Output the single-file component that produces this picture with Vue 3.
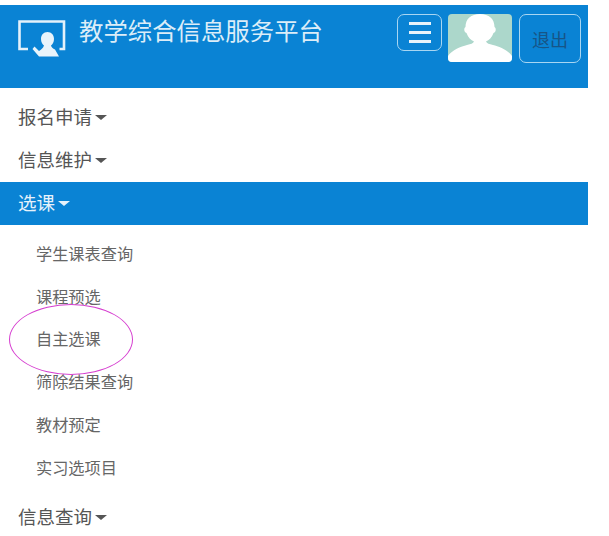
<script setup>
const subItems = ['学生课表查询', '课程预选', '自主选课', '筛除结果查询', '教材预定', '实习选项目'];
</script>

<template>
  <div class="page">
    <header class="top">
      <div class="brand">
        <svg class="logo" width="48" height="42" viewBox="0 0 48 42">
          <path d="M10 31H1.500V3.500H46V31H41.500" fill="none" stroke="#e4f1fa" stroke-width="2.600" />
          <path d="M29.500 14C33.500 14 36 17 36 21C36 24 34.500 26.500 33 27.500C33 29 35 30.500 37 31.500L41 38.500H21L14.500 31L16.500 28.500L21 33C23 31.500 25 30.500 26 27.500C24.500 26.500 23 24 23 21C23 17 25.500 14 29.500 14Z" fill="#e9f4fb" />
        </svg>
        <span class="title">教学综合信息服务平台</span>
      </div>
      <div class="actions">
        <button class="menu-btn">
          <span></span><span></span><span></span>
        </button>
        <svg class="avatar" width="64" height="48" viewBox="0 0 64 48">
          <rect width="64" height="48" rx="4" fill="#acd7cb" />
          <path d="M32 0C41 0 46.500 5 46.500 13C48.500 14 48 18.500 45.500 19C44 23.500 41 26 38 27.500C39 29.500 41 30 45 31C51 32.500 60 36 64 42V44A4 4 0 0 1 60 48H4A4 4 0 0 1 0 44V42C4 36 13 32.500 19 31C23 30 25 29.500 26 27.500C23 26 20 23.500 18.500 19C16 18.500 15.500 14 17.500 13C17.500 5 23 0 32 0Z" fill="#fff" />
        </svg>
        <button class="logout">退出</button>
      </div>
    </header>

    <nav class="nav">
      <a class="item">报名申请<i class="caret"></i></a>
      <a class="item">信息维护<i class="caret"></i></a>
      <a class="item active">选课<i class="caret"></i></a>
      <ul class="sub">
        <li v-for="name in subItems" :key="name">{{ name }}</li>
      </ul>
      <a class="item last">信息查询<i class="caret"></i></a>
    </nav>

    <div class="circle"></div>
  </div>
</template>

<style scoped>
.page {
  position: relative;
  width: 609px;
  height: 536px;
  overflow: hidden;
  background: #fff;
  font-family: "Noto Sans CJK SC", "Liberation Sans", sans-serif;
}
.top {
  display: flex;
  justify-content: space-between;
  width: 588px;
  height: 83px;
  margin-top: 5px;
  box-sizing: border-box;
  padding: 9px 7px 0 18px;
  background: #0a83d4;
}
.brand {
  display: flex;
  align-items: flex-start;
  gap: 13px;
}
.logo {
  margin-top: 4px;
}
.title {
  font-size: 24.4px;
  line-height: 32px;
  color: #dcedf8;
}
.actions {
  display: flex;
  align-items: flex-start;
}
.menu-btn {
  display: flex;
  flex-direction: column;
  justify-content: center;
  align-items: center;
  gap: 6px;
  width: 45px;
  height: 37px;
  margin-right: 6px;
  box-sizing: border-box;
  background: transparent;
  border: 1.5px solid #a9d6f2;
  border-radius: 7px;
}
.menu-btn span {
  width: 22px;
  height: 3px;
  background: #e7f3fb;
}
.avatar {
  display: block;
}
.logout {
  width: 62px;
  height: 49px;
  margin-left: 7px;
  padding: 0;
  box-sizing: border-box;
  background: transparent;
  border: 1.5px solid #a9d6f2;
  border-radius: 7px;
  color: #175587;
  font-family: inherit;
  font-size: 18px;
}
.nav {
  display: flex;
  flex-direction: column;
  width: 588px;
  padding-top: 8px;
}
.item {
  display: flex;
  align-items: center;
  height: 43px;
  box-sizing: border-box;
  padding: 0 0 4px 18px;
  font-size: 18.5px;
  color: #555;
}
.item.active {
  color: #e6f2fb;
  background: #0a83d4;
}
.item.last {
  margin-top: 8px;
}
.caret {
  width: 0;
  height: 0;
  margin-left: 3px;
  margin-top: 3px;
  border-top: 5px solid currentColor;
  border-left: 6px solid transparent;
  border-right: 6px solid transparent;
}
.sub {
  list-style: none;
  margin: 0;
  padding: 6.5px 0 0;
}
.sub li {
  display: flex;
  align-items: center;
  height: 42.8px;
  padding-left: 36px;
  font-size: 16.2px;
  color: #666;
}
.circle {
  position: absolute;
  left: 9px;
  top: 304px;
  width: 124px;
  height: 71px;
  box-sizing: border-box;
  border: 1px solid #d63fd0;
  border-radius: 50%;
}
</style>
